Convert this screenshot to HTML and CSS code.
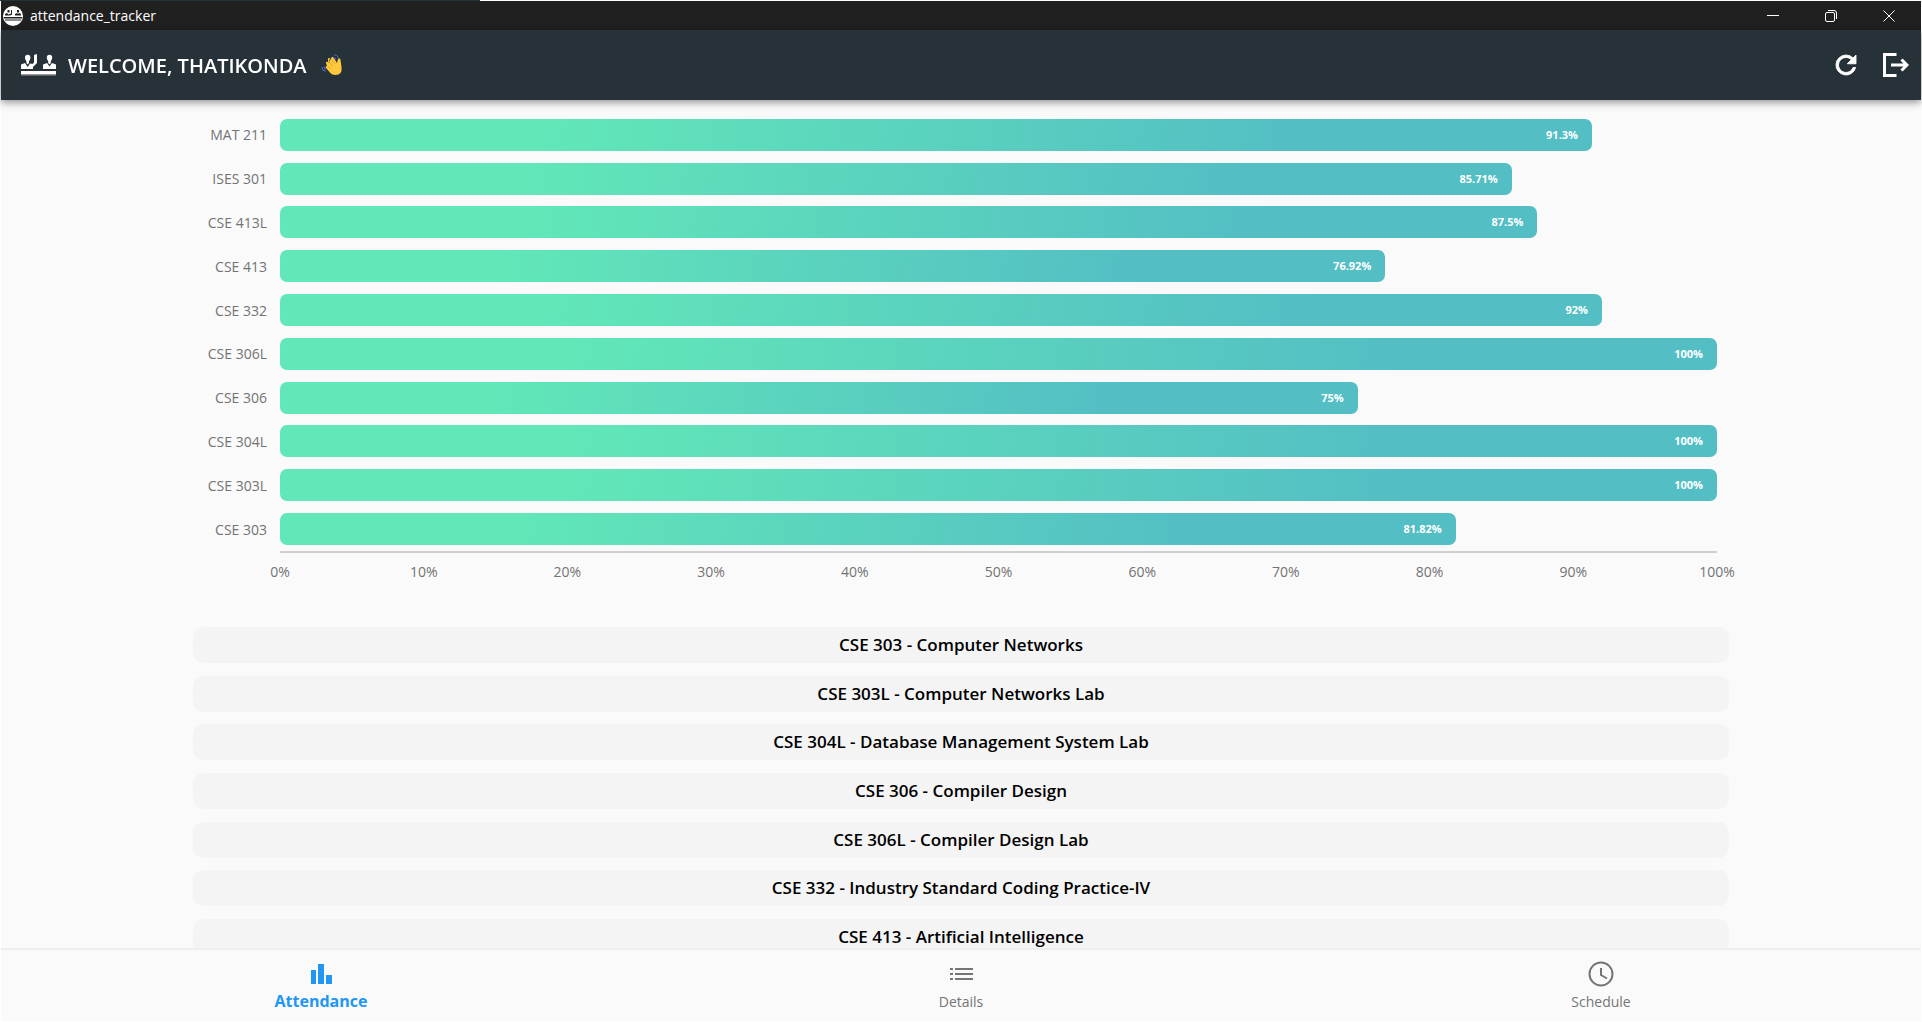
FILE: index.html
```html
<!DOCTYPE html>
<html lang="en">
<head>
<meta charset="utf-8">
<title>attendance_tracker</title>
<link rel="stylesheet" href="styles.css">
</head>
<body>
<div class="window">
  <div class="titlebar">
    <svg class="app-badge" viewBox="0 0 20 20" aria-hidden="true">
      <circle cx="10" cy="10" r="10" fill="#fff"/>
      <path d="M2 9.500V8l2-1 1.500 1.500L8 7.500V4h1v4.500l-2 1zM4.500 4h2v2.500h-2zM12 9.500V8l2-1 1 1 1-1 2 1v1.500zM14 4h2v2.500h-2zM1 11h18v1.500H1zM2 13.500h16v1H2z" fill="#202020"/>
    </svg>
    <span class="window-title">attendance_tracker</span>
    <div class="window-controls">
      <button type="button" aria-label="Minimize"><svg viewBox="0 0 12 12"><path d="M0 5.500h12"/></svg></button>
      <button type="button" aria-label="Restore"><svg viewBox="0 0 12 12"><rect x=".5" y="2.500" width="9" height="9" rx="1.500"/><path d="M3 .5h6a2.500 2.500 0 0 1 2.500 2.500v6"/></svg></button>
      <button type="button" aria-label="Close"><svg viewBox="0 0 12 12"><path d="M.5.5l11 11M11.500.5l-11 11"/></svg></button>
    </div>
  </div>

  <header class="appbar">
    <svg class="logo" viewBox="0 0 35 22" aria-hidden="true">
      <g fill="#fff">
        <path d="M4 3.500a2.700 2.700 0 0 1 5.400 0c0 2-.8 3-1.400 3.700V9l-1.300 1.500L5.400 9V7.200C4.800 6.500 4 5.500 4 3.500z"/>
        <path d="M0 15v-4.500L4 9l2.700 4L9 9.500l2.500.5 1.500-1.500V1l3-1v9l-4 4v2z"/>
        <path d="M25.800 3.500a2.700 2.700 0 0 1 5.400 0c0 2-.8 3-1.400 3.700V9l-1.300 1.500L27.200 9V7.200c-.6-.7-1.400-1.700-1.400-3.700z"/>
        <path d="M22 15v-4.500L26 9l2.500 3.500L31 9l4 1.500V15z"/>
        <path d="M0 17h35v3H0z"/>
        <path d="M0 20h35v1.500H0z" opacity=".5"/>
      </g>
    </svg>
    <h1 class="greeting">WELCOME, THATIKONDA</h1>
    <svg class="wave" viewBox="0 0 22 22" aria-hidden="true">
      <path d="M7 10 10.500 3.500q1.500-1.500 2 0L16 9l1-4q2-2 2.500 1l1 7q1 8-6 8-4 0-6-3l-3.500-4q-1-2 1-2L5 9q0-2 2-1L7 5q1-2 2-.5z" fill="#ffc83d"/>
      <path d="M8 8l4 4M10 5l4 5M7 12l3 3" stroke="#e8a92b" fill="none"/>
      <path d="M13 1q4 0 4 3M12 3.500q2 0 3 2M1 13q0 4 4 4M3 12.500q0 2 2 2.500" stroke="#4565b3" fill="none" stroke-width="1.200"/>
    </svg>
    <div class="actions">
      <button type="button" aria-label="Refresh"><svg viewBox="0 0 24 24"><path d="M17.650 6.350A7.960 7.960 0 0 0 12 4a8 8 0 1 0 7.730 10h-2.080A6 6 0 1 1 12 6c1.660 0 3.140.69 4.220 1.780L13 11h7V4z" fill="#fff" stroke="#fff" stroke-width=".7"/></svg></button>
      <button type="button" aria-label="Log out"><svg viewBox="0 0 26 24"><path d="M13.500 1.500h-12v21h12M8 12h16M18.500 6.500 24 12l-5.500 5.500" fill="none" stroke="#fff" stroke-width="3"/></svg></button>
    </div>
  </header>

  <main class="content">
    <section class="chart" aria-label="Attendance by course">
      <div class="plot">
        <div class="row"><span class="course">MAT 211</span><div class="track"><div class="bar" style="width:91.3%">91.3%</div></div></div>
        <div class="row"><span class="course">ISES 301</span><div class="track"><div class="bar" style="width:85.71%">85.71%</div></div></div>
        <div class="row"><span class="course">CSE 413L</span><div class="track"><div class="bar" style="width:87.5%">87.5%</div></div></div>
        <div class="row"><span class="course">CSE 413</span><div class="track"><div class="bar" style="width:76.92%">76.92%</div></div></div>
        <div class="row"><span class="course">CSE 332</span><div class="track"><div class="bar" style="width:92%">92%</div></div></div>
        <div class="row"><span class="course">CSE 306L</span><div class="track"><div class="bar" style="width:100%">100%</div></div></div>
        <div class="row"><span class="course">CSE 306</span><div class="track"><div class="bar" style="width:75%">75%</div></div></div>
        <div class="row"><span class="course">CSE 304L</span><div class="track"><div class="bar" style="width:100%">100%</div></div></div>
        <div class="row"><span class="course">CSE 303L</span><div class="track"><div class="bar" style="width:100%">100%</div></div></div>
        <div class="row"><span class="course">CSE 303</span><div class="track"><div class="bar" style="width:81.82%">81.82%</div></div></div>
      </div>
      <div class="axis">
        <div class="ticks"><span>0%</span><span>10%</span><span>20%</span><span>30%</span><span>40%</span><span>50%</span><span>60%</span><span>70%</span><span>80%</span><span>90%</span><span>100%</span></div>
      </div>
    </section>
    <ul class="courses">
      <li>CSE 303 - Computer Networks</li>
      <li>CSE 303L - Computer Networks Lab</li>
      <li>CSE 304L - Database Management System Lab</li>
      <li>CSE 306 - Compiler Design</li>
      <li>CSE 306L - Compiler Design Lab</li>
      <li>CSE 332 - Industry Standard Coding Practice-IV</li>
      <li>CSE 413 - Artificial Intelligence</li>
    </ul>
  </main>

  <nav class="tabs">
    <a class="tab active" href="#attendance">
      <svg viewBox="0 0 28 28" fill="currentColor"><path d="M4 10h5v14H4zM11 4h6v20h-6zM19 15h6v9h-6z"/></svg>
      <span>Attendance</span>
    </a>
    <a class="tab" href="#details">
      <svg viewBox="0 0 28 28" fill="currentColor"><path d="M3 8h3v2H3zM8 8h18v2H8zM3 13h3v2H3zM8 13h18v2H8zM3 18h3v2H3zM8 18h18v2H8z"/></svg>
      <span>Details</span>
    </a>
    <a class="tab" href="#schedule">
      <svg viewBox="0 0 28 28" fill="none" stroke="currentColor" stroke-width="2"><circle cx="14" cy="14" r="11.500"/><path d="M14 8v7l6 3.500"/></svg>
      <span>Schedule</span>
    </a>
  </nav>
</div>
</body>
</html>
```
FILE: styles.css
```css
* { box-sizing: border-box; }

body {
  margin: 0;
  background: #fff;
  font-family: "Open Sans", "Noto Sans", sans-serif;
  color: #000;
}

button {
  display: flex;
  align-items: center;
  justify-content: center;
  padding: 0;
  border: 0;
  background: none;
  cursor: pointer;
}

.window {
  display: flex;
  flex-direction: column;
  height: 100vh;
  padding: 1px;
  background: linear-gradient(90deg, #263238 25%, #fff 25%) top / 100% 1px no-repeat;
}

.titlebar {
  display: flex;
  flex: none;
  align-items: center;
  gap: 7px;
  height: 29px;
  padding: 0 3px 0 2px;
  background: #202020;
  color: #fff;
  font-size: 14px;
}

.app-badge { width: 20px; height: 20px; }

.window-controls {
  display: flex;
  align-self: stretch;
  margin-left: auto;
}

.window-controls button { width: 58px; }

.window-controls svg {
  width: 12px;
  height: 12px;
  fill: none;
  stroke: #fff;
}

.appbar {
  position: relative;
  display: flex;
  flex: none;
  align-items: center;
  height: 70px;
  padding: 0 12px 0 20px;
  background: #263238;
  box-shadow: 0 2px 8px rgba(0, 0, 0, 0.45);
  color: #fff;
}

.logo { width: 35px; height: 22px; }

.greeting {
  margin: 0 14px 0 12px;
  font-size: 20px;
  font-weight: 600;
}

.wave { width: 22px; height: 22px; }

.actions {
  display: flex;
  gap: 22px;
  margin-left: auto;
}

.actions button:first-child svg { width: 30px; height: 30px; }
.actions button:last-child svg { width: 26px; height: 24px; }

.content {
  flex: 1;
  min-height: 0;
  padding: 13px 10% 0;
  overflow-y: auto;
  background: #fafafa;
  scrollbar-width: none;
}

.chart {
  padding-right: 12px;
  color: #6e7079;
  color: #737373;
  font-size: 14px;
}

.plot {
  display: flex;
  flex-direction: column;
  height: 438px;
}

.row {
  display: grid;
  flex: 1;
  grid-template-columns: 74px 1fr;
  gap: 13px;
  align-items: center;
}

.course { text-align: right; }

.bar {
  height: 32px;
  padding-right: 14px;
  border-radius: 7px;
  background: linear-gradient(100deg, #61e7b8 20%, #53bec4 78%);
  color: #fff;
  font-size: 11px;
  font-weight: 700;
  line-height: 32px;
  text-align: right;
}

.axis {
  margin-left: 87px;
  border-top: 2px solid #cfcfcf;
}

.ticks {
  display: grid;
  grid-template-columns: repeat(11, 1fr);
  margin: 9px -5% 0;
  line-height: 20px;
  text-align: center;
}

.courses {
  display: flex;
  flex-direction: column;
  justify-content: space-between;
  height: 328px;
  margin: 45px 0 0;
  padding: 0;
  list-style: none;
}

.courses li {
  border-radius: 10px;
  background: #f4f4f4;
  font-size: 17px;
  font-weight: 600;
  line-height: 36px;
  text-align: center;
}

.tabs {
  display: grid;
  flex: none;
  grid-template-columns: repeat(3, 1fr);
  height: 73px;
  border-top: 2px solid #eee;
  background: #fafafa;
}

.tab {
  display: flex;
  flex-direction: column;
  align-items: center;
  padding-top: 10px;
  color: #757575;
  font-size: 14px;
  line-height: 28px;
  text-decoration: none;
}

.tab svg { width: 28px; height: 28px; }

.tab.active {
  color: #2196f3;
  font-size: 16px;
  font-weight: 700;
  line-height: 26px;
}
```
